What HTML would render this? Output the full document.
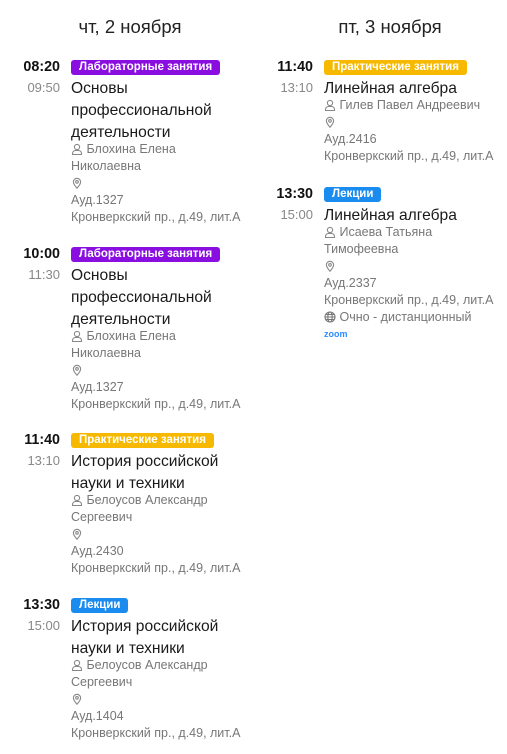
<!DOCTYPE html>
<html><head><meta charset="utf-8"><style>
body{margin:0;width:507px;height:754px;background:#fff;font-family:"Liberation Sans","DejaVu Sans",sans-serif;position:relative;overflow:hidden;color:#1a1a1a}
.h{position:absolute;top:16px;font-size:18.5px;color:#222;width:200px;text-align:center}
.ev{position:absolute;width:240px}
.t1{position:absolute;left:-1px;top:2px;font-weight:bold;font-size:14.3px;width:39px;text-align:right;color:#111}
.t2{position:absolute;left:0;top:23px;font-size:13px;width:38px;text-align:right;color:#888}
.c{position:absolute;left:49px;top:0;width:200px}
.b{display:inline-block;height:15px;line-height:15px;font-size:11.5px;font-weight:bold;color:#fff;padding:0 8px;border-radius:3px;margin-top:1px}
.lab{background:#8a0ee0}.pr{background:#f7b900}.lec{background:#1a8cf0}
.ti{font-size:15.6px;line-height:22px;margin-top:3px}
.s{font-size:12.5px;line-height:17px;color:#777;margin-top:-3px}
svg{vertical-align:-2px}
.z{font-size:9px;font-weight:bold;color:#2d8cff;line-height:17px}
</style></head><body>
<div class="h" style="left:30px">чт, 2 ноября</div>
<div class="h" style="left:290px">пт, 3 ноября</div>

<div class="ev" style="left:22px;top:57px"><div class="t1">08:20</div><div class="t2">09:50</div><div class="c"><span class="b lab">Лабораторные занятия</span><div class="ti">Основы<br>профессиональной<br>деятельности</div><div class="s"><svg width="12" height="12" viewBox="0 0 12 12" fill="none" stroke="#888" stroke-width="1.1"><circle cx="6" cy="4" r="2.6"/><path d="M1.5 11.5v-1a3 3 0 0 1 3-3h3a3 3 0 0 1 3 3v1z"/></svg> Блохина Елена<br>Николаевна<br><svg width="12" height="12" viewBox="0 0 12 12" fill="none" stroke="#888" stroke-width="1.1"><path d="M6 11.2C3.8 8.8 2.4 6.8 2.4 4.9a3.6 3.6 0 0 1 7.2 0c0 1.9-1.4 3.9-3.6 6.3z"/><circle cx="6" cy="4.9" r="1.3"/></svg><br>Ауд.1327<br>Кронверкский пр., д.49, лит.А</div></div></div>

<div class="ev" style="left:22px;top:244px"><div class="t1">10:00</div><div class="t2">11:30</div><div class="c"><span class="b lab">Лабораторные занятия</span><div class="ti">Основы<br>профессиональной<br>деятельности</div><div class="s"><svg width="12" height="12" viewBox="0 0 12 12" fill="none" stroke="#888" stroke-width="1.1"><circle cx="6" cy="4" r="2.6"/><path d="M1.5 11.5v-1a3 3 0 0 1 3-3h3a3 3 0 0 1 3 3v1z"/></svg> Блохина Елена<br>Николаевна<br><svg width="12" height="12" viewBox="0 0 12 12" fill="none" stroke="#888" stroke-width="1.1"><path d="M6 11.2C3.8 8.8 2.4 6.8 2.4 4.9a3.6 3.6 0 0 1 7.2 0c0 1.9-1.4 3.9-3.6 6.3z"/><circle cx="6" cy="4.9" r="1.3"/></svg><br>Ауд.1327<br>Кронверкский пр., д.49, лит.А</div></div></div>

<div class="ev" style="left:22px;top:430px"><div class="t1">11:40</div><div class="t2">13:10</div><div class="c"><span class="b pr">Практические занятия</span><div class="ti">История российской<br>науки и техники</div><div class="s"><svg width="12" height="12" viewBox="0 0 12 12" fill="none" stroke="#888" stroke-width="1.1"><circle cx="6" cy="4" r="2.6"/><path d="M1.5 11.5v-1a3 3 0 0 1 3-3h3a3 3 0 0 1 3 3v1z"/></svg> Белоусов Александр<br>Сергеевич<br><svg width="12" height="12" viewBox="0 0 12 12" fill="none" stroke="#888" stroke-width="1.1"><path d="M6 11.2C3.8 8.8 2.4 6.8 2.4 4.9a3.6 3.6 0 0 1 7.2 0c0 1.9-1.4 3.9-3.6 6.3z"/><circle cx="6" cy="4.9" r="1.3"/></svg><br>Ауд.2430<br>Кронверкский пр., д.49, лит.А</div></div></div>

<div class="ev" style="left:22px;top:595px"><div class="t1">13:30</div><div class="t2">15:00</div><div class="c"><span class="b lec">Лекции</span><div class="ti">История российской<br>науки и техники</div><div class="s"><svg width="12" height="12" viewBox="0 0 12 12" fill="none" stroke="#888" stroke-width="1.1"><circle cx="6" cy="4" r="2.6"/><path d="M1.5 11.5v-1a3 3 0 0 1 3-3h3a3 3 0 0 1 3 3v1z"/></svg> Белоусов Александр<br>Сергеевич<br><svg width="12" height="12" viewBox="0 0 12 12" fill="none" stroke="#888" stroke-width="1.1"><path d="M6 11.2C3.8 8.8 2.4 6.8 2.4 4.9a3.6 3.6 0 0 1 7.2 0c0 1.9-1.4 3.9-3.6 6.3z"/><circle cx="6" cy="4.9" r="1.3"/></svg><br>Ауд.1404<br>Кронверкский пр., д.49, лит.А</div></div></div>

<div class="ev" style="left:275px;top:57px"><div class="t1">11:40</div><div class="t2">13:10</div><div class="c"><span class="b pr">Практические занятия</span><div class="ti">Линейная алгебра</div><div class="s"><svg width="12" height="12" viewBox="0 0 12 12" fill="none" stroke="#888" stroke-width="1.1"><circle cx="6" cy="4" r="2.6"/><path d="M1.5 11.5v-1a3 3 0 0 1 3-3h3a3 3 0 0 1 3 3v1z"/></svg> Гилев Павел Андреевич<br><svg width="12" height="12" viewBox="0 0 12 12" fill="none" stroke="#888" stroke-width="1.1"><path d="M6 11.2C3.8 8.8 2.4 6.8 2.4 4.9a3.6 3.6 0 0 1 7.2 0c0 1.9-1.4 3.9-3.6 6.3z"/><circle cx="6" cy="4.9" r="1.3"/></svg><br>Ауд.2416<br>Кронверкский пр., д.49, лит.А</div></div></div>

<div class="ev" style="left:275px;top:184px"><div class="t1">13:30</div><div class="t2">15:00</div><div class="c"><span class="b lec">Лекции</span><div class="ti">Линейная алгебра</div><div class="s"><svg width="12" height="12" viewBox="0 0 12 12" fill="none" stroke="#888" stroke-width="1.1"><circle cx="6" cy="4" r="2.6"/><path d="M1.5 11.5v-1a3 3 0 0 1 3-3h3a3 3 0 0 1 3 3v1z"/></svg> Исаева Татьяна<br>Тимофеевна<br><svg width="12" height="12" viewBox="0 0 12 12" fill="none" stroke="#888" stroke-width="1.1"><path d="M6 11.2C3.8 8.8 2.4 6.8 2.4 4.9a3.6 3.6 0 0 1 7.2 0c0 1.9-1.4 3.9-3.6 6.3z"/><circle cx="6" cy="4.9" r="1.3"/></svg><br>Ауд.2337<br>Кронверкский пр., д.49, лит.А<br><svg width="12" height="12" viewBox="0 0 12 12" fill="none" stroke="#777" stroke-width="1.1"><circle cx="6" cy="6" r="5"/><ellipse cx="6" cy="6" rx="2.2" ry="5"/><path d="M1 6h10M2 3.5h8M2 8.5h8"/></svg> Очно - дистанционный</div><div class="z">zoom</div></div></div>
</body></html>
